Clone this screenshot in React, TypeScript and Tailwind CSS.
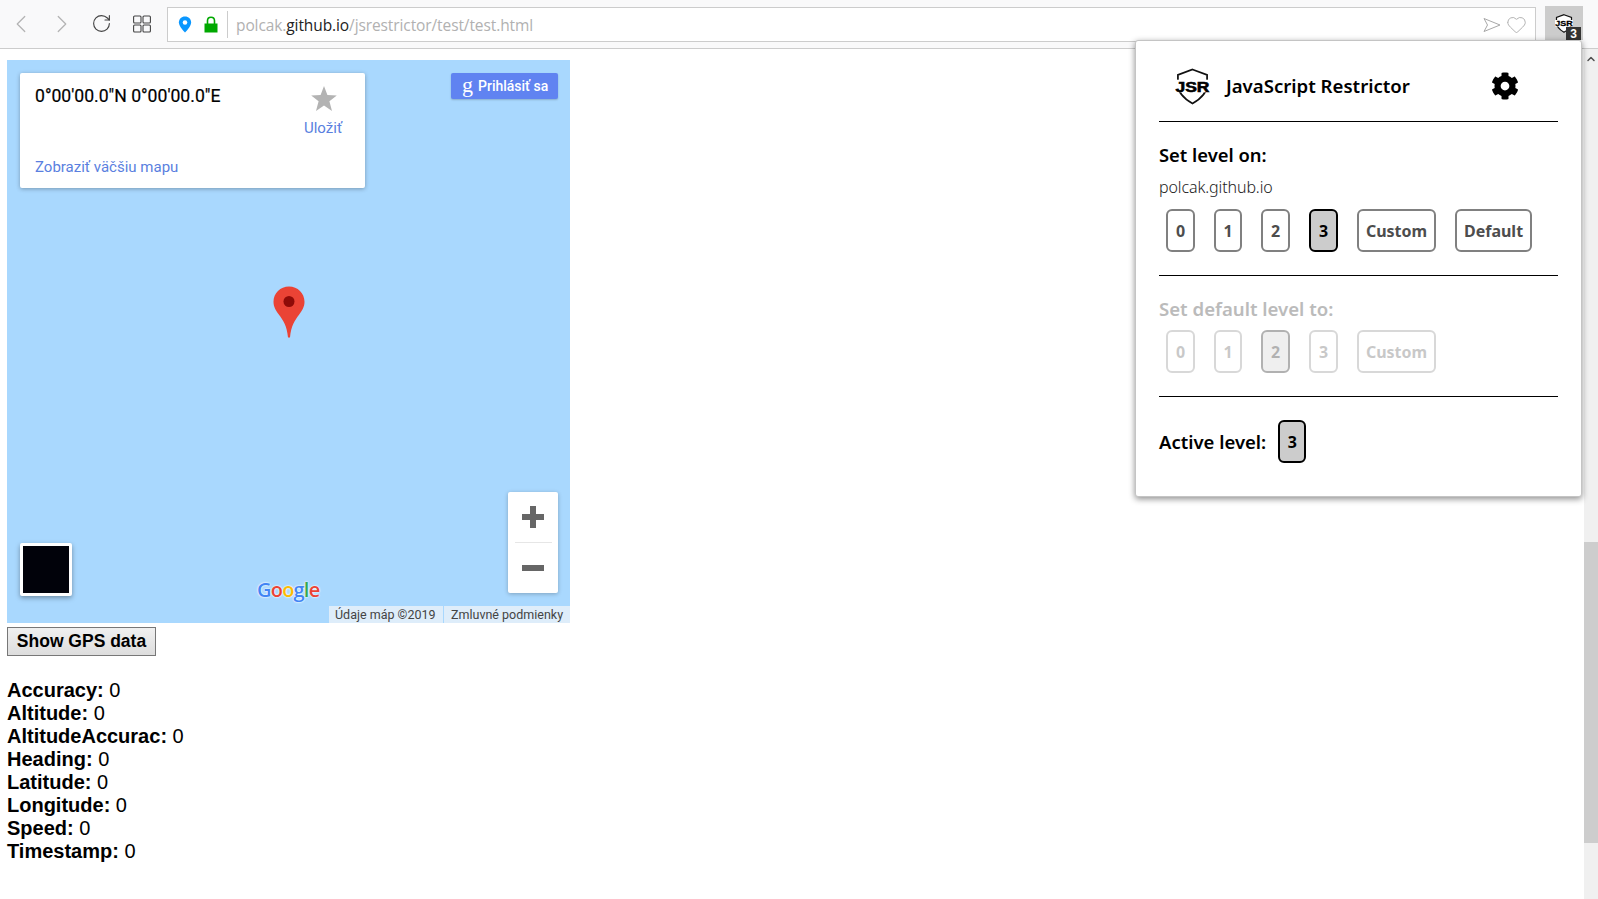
import { ChevronLeft, ChevronRight, ChevronUp, Heart, RotateCw } from "lucide-react";
import { FaCog } from "react-icons/fa";

const gpsRows = [
  "Accuracy",
  "Altitude",
  "AltitudeAccurac",
  "Heading",
  "Latitude",
  "Longitude",
  "Speed",
  "Timestamp",
];

type LevelButtonProps = {
  label: string;
  width: string;
  selected?: boolean;
  faded?: boolean;
};

function LevelButton({ label, width, selected, faded }: LevelButtonProps) {
  const border = selected ? "border-black bg-[#cccccc] text-black" : "border-[#808080] text-[#4d4d4d]";
  return (
    <div
      className={`flex h-[43px] items-center justify-center rounded-[6px] border-2 text-[16px] font-bold ${width} ${border} ${
        faded ? "opacity-30" : ""
      }`}
    >
      {label}
    </div>
  );
}

function JsrLogo({ className, small }: { className: string; small?: boolean }) {
  return (
    <svg viewBox="0 0 36 38" className={className}>
      <path
        d="M18 1.5 L33 7 L33 17 C33 26 26 32 18 36.5 C10 32 3 26 3 17 L3 7 Z"
        fill="#fff"
        stroke="#111"
        strokeWidth={small ? 2.4 : 1.8}
      />
      <rect x="0" y="12" width="36" height="13" fill="#fff" />
      <text
        x="18"
        y="24.5"
        textAnchor="middle"
        fontFamily="Liberation Sans, sans-serif"
        fontWeight="700"
        fontSize="15.5"
        textLength="35"
        lengthAdjust="spacingAndGlyphs"
        fill="#000"
        stroke="#000"
        strokeWidth="0.6"
      >
        JSR
      </text>
    </svg>
  );
}

function Toolbar() {
  return (
    <div className="flex h-[49px] shrink-0 items-start border-b border-[#cccccc] bg-[#f9f9fa]">
      <ChevronLeft size={30} strokeWidth={1} className="mt-[9px] ml-[6px] text-[#b4b4b4]" />
      <ChevronRight size={30} strokeWidth={1} className="mt-[9px] ml-[11px] text-[#b4b4b4]" />
      <RotateCw size={21} strokeWidth={1.3} className="mt-[13px] ml-[14px] text-[#444444]" />
      <svg viewBox="0 0 18 18" className="mt-[15px] ml-[21px] h-[18px] w-[18px]" fill="none" stroke="#444" strokeWidth="1.1">
        <rect x="0.6" y="1" width="7.4" height="7" rx="1" />
        <rect x="10" y="1" width="7.4" height="7" rx="1" />
        <rect x="0.6" y="10" width="7.4" height="7" rx="1" />
        <rect x="10" y="10" width="7.4" height="7" rx="1" />
      </svg>
      <div className="mt-[7px] ml-[16px] flex h-[35px] w-[1369px] items-center border border-[#cccccc] bg-white">
        <svg viewBox="0 0 14 18" className="ml-[10px] h-[17px] w-[14px]">
          <path d="M7 0.5C3.2 0.5 0.5 3.3 0.5 6.8 0.5 11 7 17.5 7 17.5S13.5 11 13.5 6.8C13.5 3.3 10.8 0.5 7 0.5Z" fill="#0a97ff" />
          <circle cx="7" cy="6.8" r="2.4" fill="#fff" />
        </svg>
        <svg viewBox="0 0 14 17" className="ml-[12px] h-[17px] w-[14px]">
          <path d="M3.5 8V4.8C3.5 2.8 5 1.3 7 1.3S10.5 2.8 10.5 4.8V8" fill="none" stroke="#00a800" strokeWidth="1.6" />
          <rect x="0.5" y="7.5" width="13" height="9" fill="#00a800" />
        </svg>
        <div className="ml-[9px] h-[27px] w-px bg-[#cccccc]" />
        <div className="ml-[8px] grow pt-[2px] font-['Open_Sans',sans-serif] text-[15.5px] tracking-[-0.1px] text-[#b1b1b1]">
          polcak.<span className="text-[#222222]">github.io</span>/jsrestrictor/test/test.html
        </div>
        <svg viewBox="0 0 18 16" className="h-[16px] w-[18px]" fill="none" stroke="#a8a8a8" strokeWidth="1">
          <path d="M1 1.5 L17 8 L1 14.5 L4.5 8 Z" />
        </svg>
        <Heart size={21} strokeWidth={1} className="mr-[8px] ml-[5px] text-[#a8a8a8]" />
      </div>
      <div className="relative mt-[6px] ml-[9px] h-[34px] w-[38px] bg-[#cccccc]">
        <JsrLogo className="absolute top-[8px] left-[10px] h-[19px] w-[18px]" small />
        <div className="absolute top-[21px] left-[21px] flex h-[13px] w-[15px] items-center justify-center bg-[#333333] font-['Liberation_Sans',sans-serif] text-[12px] font-bold text-white">
          3
        </div>
      </div>
    </div>
  );
}

function MapBox() {
  return (
    <div className="relative h-[563px] w-[563px] bg-[#a9d8fe] font-['Roboto',sans-serif]">
      <div className="absolute top-[13px] left-[13px] h-[115px] w-[345px] rounded-[2px] bg-white shadow-[0_1px_4px_rgba(0,0,0,0.3)]">
        <div className="absolute top-[13px] left-[15px] text-[17.6px] leading-[20px] font-normal text-black [-webkit-text-stroke:0.2px_#000]">
          0°00'00.0"N 0°00'00.0"E
        </div>
        <svg viewBox="0 0 26 26" className="absolute top-[12px] left-[291px] h-[27px] w-[26px]" fill="#b3b3b3">
          <path d="M13 0.5 L16.4 9.6 L25.8 9.9 L18.4 15.8 L21 25.5 L13 20 L5 25.5 L7.6 15.8 L0.2 9.9 L9.6 9.6 Z" />
        </svg>
        <div className="absolute top-[46px] left-[284px] text-[15px] leading-[18px] text-[#5a7fe0]">Uložiť</div>
        <div className="absolute top-[85px] left-[15px] text-[15px] leading-[18px] text-[#5a7fe0]">Zobraziť väčšiu mapu</div>
      </div>
      <div className="absolute top-[13px] left-[444px] flex h-[26px] w-[107px] items-center rounded-[2px] bg-[#6083f1] text-[14px] font-medium text-white shadow-[0_1px_2px_rgba(0,0,0,0.2)]">
        <span className="mb-[3px] ml-[11px] font-['Liberation_Serif',serif] text-[22px] leading-[20px]">g</span>
        <span className="ml-[5px]">Prihlásiť sa</span>
      </div>
      <svg viewBox="0 0 32 52" className="absolute top-[226px] left-[266px] h-[52px] w-[32px]">
        <path d="M16 0.5C7.3 0.5 0.5 7.2 0.5 15.8 0.5 21 3 24.8 6 28.8 10 34 14 40 15 51.5H17C18 40 22 34 26 28.8 29 24.8 31.5 21 31.5 15.8 31.5 7.2 24.7 0.5 16 0.5Z" fill="#ea4335" />
        <circle cx="16" cy="15.5" r="5.5" fill="#8e0b08" />
      </svg>
      <div className="absolute top-[432px] left-[501px] flex h-[101px] w-[50px] flex-col items-center rounded-[2px] bg-white shadow-[0_1px_4px_rgba(0,0,0,0.25)]">
        <div className="relative h-[50px] w-full">
          <div className="absolute top-[22px] left-[14px] h-[6px] w-[22px] bg-[#666666]" />
          <div className="absolute top-[14px] left-[22px] h-[22px] w-[6px] bg-[#666666]" />
        </div>
        <div className="h-px w-[37px] bg-[#e6e6e6]" />
        <div className="relative h-[50px] w-full">
          <div className="absolute top-[22px] left-[14px] h-[6px] w-[22px] bg-[#666666]" />
        </div>
      </div>
      <div className="absolute top-[483px] left-[13px] h-[53px] w-[52px] rounded-[2px] border-[3px] border-white bg-[#01020a] shadow-[0_2px_5px_rgba(0,0,0,0.35)]" />
      <div className="absolute top-[517px] left-[250px] font-['Open_Sans',sans-serif] text-[20px] leading-[26px] font-semibold tracking-[-0.8px] [text-shadow:0_0_2px_#fff,0_0_2px_#fff]">
        <span className="text-[#4285f4]">G</span>
        <span className="text-[#ea4335]">o</span>
        <span className="text-[#fbbc05]">o</span>
        <span className="text-[#4285f4]">g</span>
        <span className="text-[#34a853]">l</span>
        <span className="text-[#ea4335]">e</span>
      </div>
      <div className="absolute right-0 bottom-0 flex h-[17px] text-[12.5px] leading-[18px] text-[#444444]">
        <div className="w-[114px] bg-[#deedfa] pl-[6px]">Údaje máp ©2019</div>
        <div className="ml-px w-[126px] bg-[#deedfa] pl-[7px]">Zmluvné podmienky</div>
      </div>
    </div>
  );
}

function Popup() {
  return (
    <div className="absolute top-[40px] left-[1135px] h-[457px] w-[447px] rounded-[3px] border border-[#c4c4c4] bg-white pt-[27px] pr-[23px] pl-[23px] font-['Noto_Sans',sans-serif] text-black shadow-[0_2px_6px_rgba(0,0,0,0.45)]">
      <div className="flex h-[54px] items-start border-b border-black">
        <JsrLogo className="ml-[16px] h-[37px] w-[35px]" />
        <div className="mt-[3px] ml-[16px] text-[18.6px] leading-[30px] font-semibold">JavaScript Restrictor</div>
        <FaCog size={28} className="mt-[4px] ml-[81px]" />
      </div>
      <div className="mt-[21px] text-[18.4px] leading-[24px] font-semibold">Set level on:</div>
      <div className="mt-[8px] text-[16px] leading-[24px] font-light tracking-[-0.1px] text-[#222222]">polcak.github.io</div>
      <div className="mt-[10px] ml-[7px] flex gap-[19px]">
        <LevelButton label="0" width="w-[29px]" />
        <LevelButton label="1" width="w-[28px]" />
        <LevelButton label="2" width="w-[29px]" />
        <LevelButton label="3" width="w-[29px]" selected />
        <LevelButton label="Custom" width="w-[79px]" />
        <LevelButton label="Default" width="w-[77px]" />
      </div>
      <div className="mt-[23px] h-px bg-black" />
      <div className="mt-[21px] text-[18.6px] leading-[24px] font-semibold text-[#bbbbbb]">Set default level to:</div>
      <div className="mt-[9px] ml-[7px] flex gap-[19px]">
        <LevelButton label="0" width="w-[29px]" faded />
        <LevelButton label="1" width="w-[28px]" faded />
        <LevelButton label="2" width="w-[29px]" selected faded />
        <LevelButton label="3" width="w-[29px]" faded />
        <LevelButton label="Custom" width="w-[79px]" faded />
      </div>
      <div className="mt-[23px] h-px bg-black" />
      <div className="mt-[23px] flex items-center gap-[12px]">
        <div className="text-[18.5px] font-semibold">Active level:</div>
        <LevelButton label="3" width="w-[28px]" selected />
      </div>
    </div>
  );
}

export default function App() {
  return (
    <div className="relative flex h-[899px] w-full flex-col overflow-hidden bg-white">
      <Toolbar />
      <div className="flex grow">
        <div className="grow pt-[11px] pl-[7px] font-['Liberation_Sans',sans-serif] text-black">
          <MapBox />
          <div className="mt-[4px] flex h-[29px] w-[149px] items-center justify-center border border-[#777777] bg-gradient-to-b from-[#f0f0f0] to-[#dddddd] text-[17.5px] font-bold">
            Show GPS data
          </div>
          <div className="mt-[23px] text-[20px] leading-[23px]">
            {gpsRows.map((row) => (
              <div key={row}>
                <b>{row}:</b> 0
              </div>
            ))}
          </div>
        </div>
        <div className="w-[14px] shrink-0 bg-[#f0f0f0]">
          <ChevronUp size={12} strokeWidth={3} className="mt-[4px] ml-px text-[#505050]" />
          <div className="mt-[477px] h-[301px] bg-[#cdcdcd]" />
        </div>
      </div>
      <Popup />
    </div>
  );
}
